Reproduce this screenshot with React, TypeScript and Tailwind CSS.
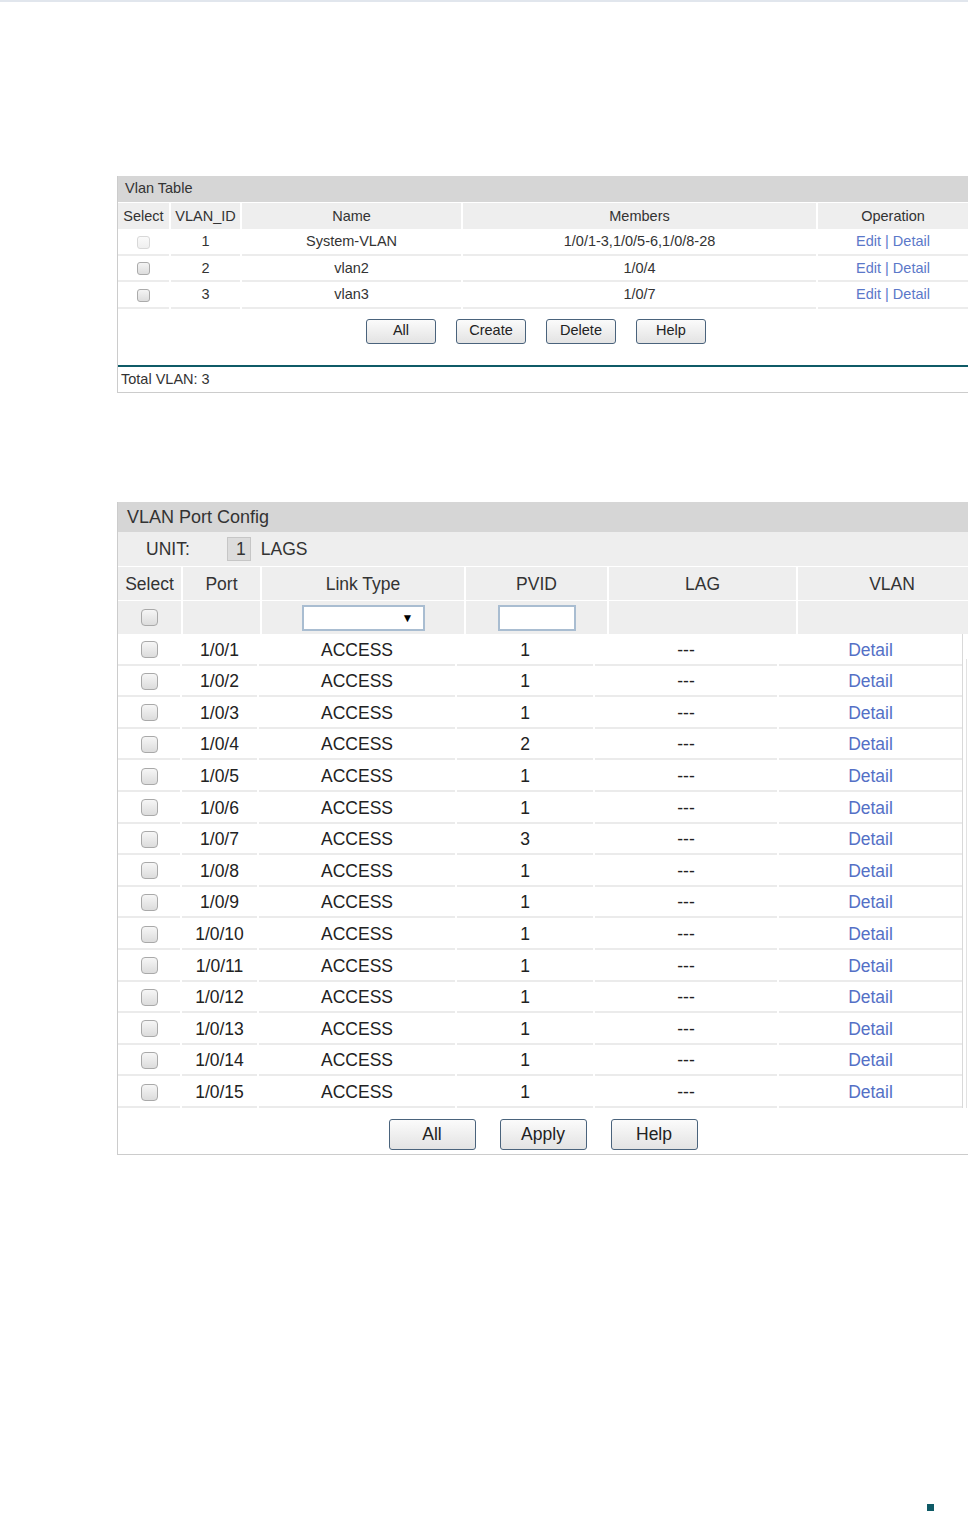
import React from 'react';

const TOP_COLS = ['w-[51px]', 'w-[69px]', 'w-[219px]', 'w-[353px]', 'flex-1'];
const PORT_HEAD_COLS = ['w-[63px]', 'w-[77px]', 'w-[202px]', 'w-[141px]', 'w-[187px]', 'flex-1'];
const PORT_ROW_COLS = ['w-[62px]', 'w-[75px]', 'w-[196px]', 'w-[136px]', 'w-[182px]', 'flex-1'];

const VLANS = [
    { id: '1', name: 'System-VLAN', members: '1/0/1-3,1/0/5-6,1/0/8-28', disabled: true },
    { id: '2', name: 'vlan2', members: '1/0/4', disabled: false },
    { id: '3', name: 'vlan3', members: '1/0/7', disabled: false },
];

const PVIDS = ['1', '1', '1', '2', '1', '1', '3', '1', '1', '1', '1', '1', '1', '1', '1'];

function Check({ big, disabled }: { big?: boolean; disabled?: boolean }) {
    return (
        <div
            className={
                big
                    ? 'h-[17px] w-[17px] rounded-[4px] border border-[#a9a9a9] bg-linear-to-b from-[#f6f6f6] to-[#dcdcdc]'
                    : disabled
                      ? 'h-[13px] w-[13px] rounded-[3px] border border-[#d8d8d8] bg-linear-to-b from-[#fafafa] to-[#efefef]'
                      : 'h-[13px] w-[13px] rounded-[3px] border border-[#ababab] bg-linear-to-b from-[#f4f4f4] to-[#dddddd]'
            }
        />
    );
}

function Btn({ label, big }: { label: string; big?: boolean }) {
    return (
        <button
            className={
                big
                    ? 'flex h-[31px] w-[87px] items-center justify-center rounded-[3px] border border-[#4a637c] bg-linear-to-b from-[#fbfbfb] to-[#e3e3e3] text-[17.5px] text-[#222]'
                    : 'flex h-[25px] w-[70px] items-center justify-center rounded-[3px] border border-[#4a637c] bg-linear-to-b from-[#fbfbfb] to-[#e3e3e3] text-[14.5px] text-[#222]'
            }
        >
            {label}
        </button>
    );
}

function VlanTable() {
    const heads = ['Select', 'VLAN_ID', 'Name', 'Members', 'Operation'];
    return (
        <div className="w-[851px] border-b border-l border-[#cccccc] text-[14.5px] text-[#333]">
            <div className="flex h-[26px] items-center bg-[#d6d6d6] pl-[7px]">Vlan Table</div>
            <div className="flex h-[27px] gap-[2px] border-t border-white">
                {heads.map((h, i) => (
                    <div key={h} className={`${TOP_COLS[i]} flex items-center justify-center bg-[#eeeeee] pt-px`}>
                        {h}
                    </div>
                ))}
            </div>
            {VLANS.map((v) => (
                <div key={v.id} className="flex h-[26.5px] gap-[2px]">
                    <div className={`${TOP_COLS[0]} flex items-center justify-center border-b-2 border-[#ececec] pt-[2px]`}>
                        <Check disabled={v.disabled} />
                    </div>
                    <div className={`${TOP_COLS[1]} flex items-center justify-center border-b-2 border-[#ececec] pt-[2px]`}>{v.id}</div>
                    <div className={`${TOP_COLS[2]} flex items-center justify-center border-b-2 border-[#ececec] pt-[2px]`}>{v.name}</div>
                    <div className={`${TOP_COLS[3]} flex items-center justify-center border-b-2 border-[#ececec] pt-[2px]`}>{v.members}</div>
                    <div
                        className={`${TOP_COLS[4]} flex items-center justify-center border-b-2 border-[#ececec] pt-[2px] text-[#5b78c9]`}
                    >
                        Edit | Detail
                    </div>
                </div>
            ))}
            <div className="flex h-[56.5px] justify-center gap-[20px] pr-[14px] pt-[10px]">
                <Btn label="All" />
                <Btn label="Create" />
                <Btn label="Delete" />
                <Btn label="Help" />
            </div>
            <div className="h-[2px] bg-[#0f5b67]" />
            <div className="flex h-[25px] items-center pl-[3px]">Total VLAN: 3</div>
        </div>
    );
}

function PortConfig() {
    const heads = ['Select', 'Port', 'Link Type', 'PVID', 'LAG'];
    return (
        <div className="w-[851px] border-b border-l border-[#cccccc] text-[17.5px] text-[#222]">
            <div className="flex h-[30px] items-center bg-[#d6d6d6] pl-[9px] text-[18px] text-[#333]">VLAN Port Config</div>
            <div className="flex h-[34px] items-center bg-[#eeeeee] pl-[28px] text-[#333]">
                <span>UNIT:</span>
                <span className="ml-[37px] flex h-[24px] w-[24px] items-center justify-end border border-[#c6c6c6] bg-[#dcdcdc] pr-[4px]">
                    1
                </span>
                <span className="ml-[10px]">LAGS</span>
            </div>

            {/* column heads */}
            <div className="flex h-[34px] gap-[2px] border-t border-white text-[#333]">
                {heads.map((h, i) => (
                    <div key={h} className={`${PORT_HEAD_COLS[i]} flex items-center justify-center bg-[#eeeeee] pt-px`}>
                        {h}
                    </div>
                ))}
                <div className={`${PORT_HEAD_COLS[5]} flex items-center justify-center bg-[#eeeeee] pl-[18px] pt-px`}>VLAN</div>
            </div>

            {/* filter row */}
            <div className="flex h-[34px] gap-[2px] border-t border-white">
                <div className={`${PORT_HEAD_COLS[0]} flex items-center justify-center bg-[#eeeeee]`}>
                    <Check big />
                </div>
                <div className={`${PORT_HEAD_COLS[1]} bg-[#eeeeee]`} />
                <div className={`${PORT_HEAD_COLS[2]} flex items-center justify-center bg-[#eeeeee]`}>
                    <div className="flex h-[26px] w-[123px] items-center justify-end border-2 border-[#a9bdd1] bg-white pr-[9px] text-[12px] text-black">
                        ▼
                    </div>
                </div>
                <div className={`${PORT_HEAD_COLS[3]} flex items-center justify-center bg-[#eeeeee]`}>
                    <div className="h-[26px] w-[78px] border-2 border-[#a9bdd1] bg-white" />
                </div>
                <div className={`${PORT_HEAD_COLS[4]} bg-[#eeeeee]`} />
                <div className={`${PORT_HEAD_COLS[5]} bg-[#eeeeee]`} />
            </div>

            {/* port rows with scroll track */}
            <div className="flex">
                <div className="w-[844px]">
                    {PVIDS.map((pvid, i) => (
                        <div key={i} className="flex h-[31.6px] gap-[2px]">
                            <div className={`${PORT_ROW_COLS[0]} flex items-center justify-center border-b-2 border-[#ebebeb] pt-[2px]`}>
                                <Check big />
                            </div>
                            <div className={`${PORT_ROW_COLS[1]} flex items-center justify-center border-b-2 border-[#ebebeb] pt-[2px]`}>
                                1/0/{i + 1}
                            </div>
                            <div className={`${PORT_ROW_COLS[2]} flex items-center justify-center border-b-2 border-[#ebebeb] pt-[2px]`}>
                                ACCESS
                            </div>
                            <div className={`${PORT_ROW_COLS[3]} flex items-center justify-center border-b-2 border-[#ebebeb] pt-[2px]`}>
                                {pvid}
                            </div>
                            <div className={`${PORT_ROW_COLS[4]} flex items-center justify-center border-b-2 border-[#ebebeb] pt-[2px]`}>
                                ---
                            </div>
                            <div
                                className={`${PORT_ROW_COLS[5]} flex items-center justify-center border-b-2 border-[#ebebeb] pt-[2px] text-[#5470c6]`}
                            >
                                Detail
                            </div>
                        </div>
                    ))}
                </div>
                <div className="flex-1 border-l border-[#d9d9d9] pl-[3px] pt-[25px]">
                    <div className="h-full border-l border-[#e2e2e2]" />
                </div>
            </div>

            <div className="flex h-[46px] justify-center gap-[24px] pt-[11px]">
                <Btn big label="All" />
                <Btn big label="Apply" />
                <Btn big label="Help" />
            </div>
        </div>
    );
}

export default function App() {
    return (
        <div className="min-h-[1514px] bg-white font-['Liberation_Sans',Arial,sans-serif]">
            <div className="h-[2px] bg-[#e1e6ed]" />
            <div className="pl-[117px] pt-[174px]">
                <VlanTable />
                <div className="h-[109px]" />
                <PortConfig />
            </div>
            <div className="flex justify-end pr-[34px] pt-[349px]">
                <div className="h-[7px] w-[7px] bg-[#0e5a66]" />
            </div>
        </div>
    );
}
